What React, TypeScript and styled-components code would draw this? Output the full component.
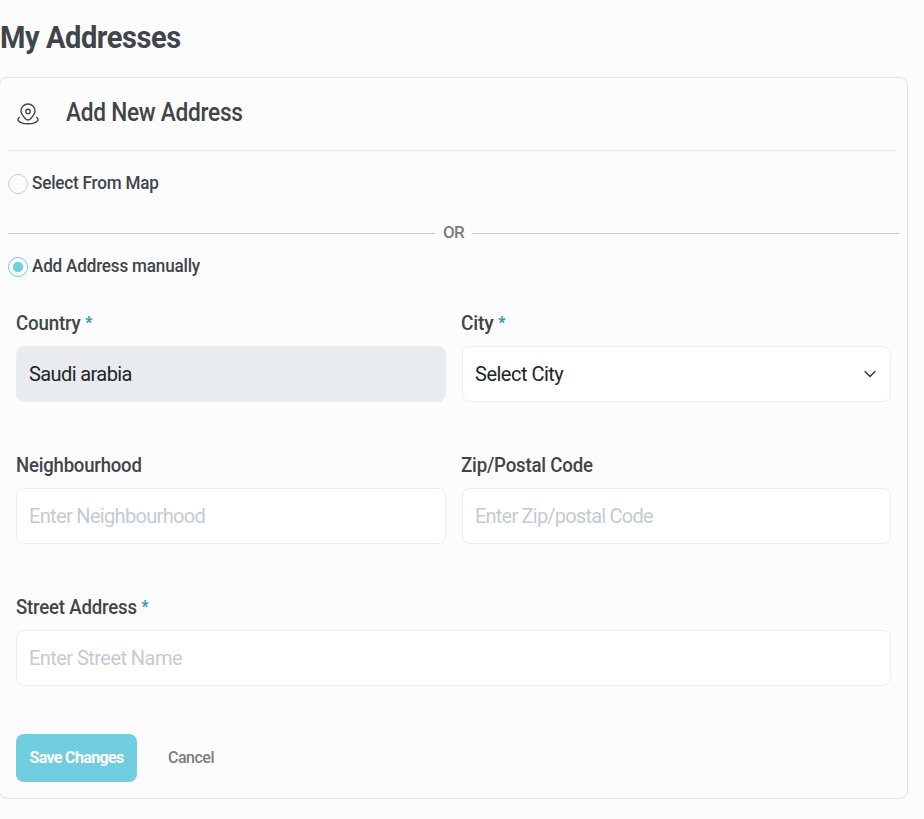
import React from "react";
import styled, { createGlobalStyle } from "styled-components";

const GlobalStyle = createGlobalStyle`
  *, *::before, *::after { box-sizing: border-box; }
  body {
    margin: 0;
    background: #fcfcfc;
    color: #40454a;
    font-family: Roboto, "Liberation Sans", sans-serif;
    overflow: hidden;
  }
  input, select, button { font-family: inherit; margin: 0; }
`;

const Page = styled.main`
  height: 819px;
  padding-top: 13px;
`;

const Title = styled.h1`
  margin: 0 0 16px;
  height: 48px;
  font-size: 32px;
  line-height: 48px;
  font-weight: 700;
  letter-spacing: -0.5px;
  white-space: nowrap;
  transform: scaleX(0.908);
  transform-origin: left;
`;

const Card = styled.section`
  width: 909px;
  height: 722px;
  margin-left: -1px;
  border: 1px solid #dee2e6;
  border-radius: 8px;
  padding: 0 8px;
`;

const CardHeader = styled.header`
  display: flex;
  align-items: center;
  height: 73px;
  margin-right: 3px;
  padding-left: 8px;
  border-bottom: 1px solid #ececec;
`;

const CardTitle = styled.h2`
  margin: 0 0 3px 26px;
  font-size: 25px;
  line-height: 32px;
  font-weight: 500;
  letter-spacing: -0.3px;
  transform: scaleX(0.907);
  transform-origin: left;
`;

const RadioRow = styled.label`
  display: flex;
  align-items: center;
  gap: 4px;
  height: 20px;
`;

const Radio = styled.input`
  appearance: none;
  width: 20px;
  height: 20px;
  border: 1px solid #c9ccd1;
  border-radius: 50%;
  background: #fcfcfc;
  &:checked {
    border-color: #71cde0;
    background: radial-gradient(circle, #71cde0 0 4.8px, #fcfcfc 5.4px);
  }
`;

const RadioText = styled.span`
  font-size: 18px;
  line-height: 20px;
  font-weight: 500;
  letter-spacing: -0.2px;
  margin-top: -2px;
  transform: scaleX(0.95);
  transform-origin: left;
`;

const MapOption = styled.div`
  padding-top: 23px;
`;

const Divider = styled.div`
  display: flex;
  align-items: center;
  gap: 8px;
  height: 20px;
  margin: 29px 0 14px;
  color: #7a7d80;
  font-size: 17px;
  font-weight: 500;
  line-height: 20px;
  letter-spacing: -0.7px;
  &::before, &::after {
    content: "";
    flex: 1;
    height: 1px;
    margin-top: 1px;
    background: #c8c9cc;
  }
`;

const DividerText = styled.span`
  width: 21px;
  margin-top: -2px;
`;

const Form = styled.form`
  display: grid;
  grid-template-columns: 430px 429px;
  column-gap: 16px;
  row-gap: 48px;
  padding: 35px 8px 0;
`;

const Field = styled.div<{ $wide?: boolean }>`
  display: flex;
  flex-direction: column;
  height: 90px;
  justify-content: space-between;
  grid-column: ${(p) => (p.$wide ? "1 / -1" : "auto")};
  margin-bottom: ${(p) => (p.$wide ? 0 : 4)}px;
`;

const Label = styled.label<{ $scale: number; $shift?: number }>`
  display: flex;
  gap: 5px;
  height: 22px;
  margin-left: ${(p) => p.$shift ?? -0.5}px;
  font-size: 20px;
  line-height: 22px;
  font-weight: 500;
  letter-spacing: -0.2px;
  transform: scaleX(${(p) => p.$scale});
  transform-origin: left;
`;

const Star = styled.span`
  color: #2c9ab5;
  font-size: 16px;
  font-weight: 900;
  letter-spacing: 0;
`;

const Control = styled.input<{ $track: number }>`
  width: 100%;
  height: 56px;
  border: 1px solid #eceded;
  border-radius: 8px;
  padding: 0 12px;
  background: #fff;
  color: #212529;
  font-size: 20px;
  letter-spacing: ${(p) => p.$track}px;
  outline: 0;
  &::placeholder { color: #c5cbd2; opacity: 1; }
  &:disabled { background: #e9ecef; border-color: #eceef0; }
`;

const SelectBox = styled.div`
  display: grid;
  align-items: center;
  > * { grid-area: 1 / 1; }
  > svg { justify-self: end; margin-right: 14px; pointer-events: none; }
`;

const Select = styled(Control)`
  appearance: none;
`;

const Actions = styled.div`
  display: flex;
  gap: 31px;
  grid-column: 1 / -1;
`;

const Button = styled.button<{ $primary?: boolean }>`
  width: ${(p) => (p.$primary ? "121px" : "auto")};
  height: 48px;
  padding: 0 0 1px;
  border: 0;
  border-radius: 8px;
  background: ${(p) => (p.$primary ? "#71cde0" : "transparent")};
  color: ${(p) => (p.$primary ? "#fff" : "#7a7d80")};
  font-size: 16px;
  font-weight: ${(p) => (p.$primary ? 700 : 500)};
  letter-spacing: ${(p) => (p.$primary ? -0.65 : -0.5)}px;
  white-space: nowrap;
`;

const PinIcon = () => (
  <svg width="24" height="24" viewBox="0 0 24 24" fill="none" stroke="#40454a" strokeWidth="1.4" strokeLinecap="round">
    <path d="M12 18c-1.2 0-2.2-.8-3.1-1.8C7 14.1 5 11.8 5 9a7 7 0 0 1 14 0c0 2.8-2 5.1-3.9 7.2-.9 1-1.9 1.8-3.1 1.8Z" />
    <circle cx="12" cy="9.4" r="2.2" />
    <path d="M3.500 15.400C2.500 15.900 2 16.600 2 17.400c0 2.500 4.500 4.400 10 4.400s10-1.900 10-4.400c0-.8-.5-1.500-1.500-2" />
  </svg>
);

const Chevron = () => (
  <svg width="14" height="10" viewBox="0 0 14 10" fill="none" stroke="#343a40" strokeWidth="1.6" strokeLinecap="round" strokeLinejoin="round">
    <path d="m2.200 2.700 4.800 4.800 4.800-4.800" />
  </svg>
);

export default function App() {
  return (
    <Page>
      <GlobalStyle />
      <Title>My Addresses</Title>
      <Card>
        <CardHeader>
          <PinIcon />
          <CardTitle>Add New Address</CardTitle>
        </CardHeader>
        <MapOption>
          <RadioRow>
            <Radio type="radio" name="mode" />
            <RadioText>Select From Map</RadioText>
          </RadioRow>
        </MapOption>
        <Divider><DividerText>OR</DividerText></Divider>
        <RadioRow>
          <Radio type="radio" name="mode" defaultChecked />
          <RadioText>Add Address manually</RadioText>
        </RadioRow>
        <Form>
          <Field>
            <Label $scale={0.935}>Country <Star>*</Star></Label>
            <Control $track={-0.6} defaultValue="Saudi arabia" disabled />
          </Field>
          <Field>
            <Label $scale={0.96} $shift={-1.3}>City <Star>*</Star></Label>
            <SelectBox>
              <Select as="select" $track={-0.5}>
                <option>Select City</option>
              </Select>
              <Chevron />
            </SelectBox>
          </Field>
          <Field>
            <Label $scale={0.926}>Neighbourhood</Label>
            <Control $track={-0.67} placeholder="Enter Neighbourhood" />
          </Field>
          <Field>
            <Label $scale={0.933} $shift={-1.3}>Zip/Postal Code</Label>
            <Control $track={-0.78} placeholder="Enter Zip/postal Code" />
          </Field>
          <Field $wide>
            <Label $scale={0.93}>Street Address <Star>*</Star></Label>
            <Control $track={-0.55} placeholder="Enter Street Name" />
          </Field>
          <Actions>
            <Button type="button" $primary>Save Changes</Button>
            <Button type="button">Cancel</Button>
          </Actions>
        </Form>
      </Card>
    </Page>
  );
}
